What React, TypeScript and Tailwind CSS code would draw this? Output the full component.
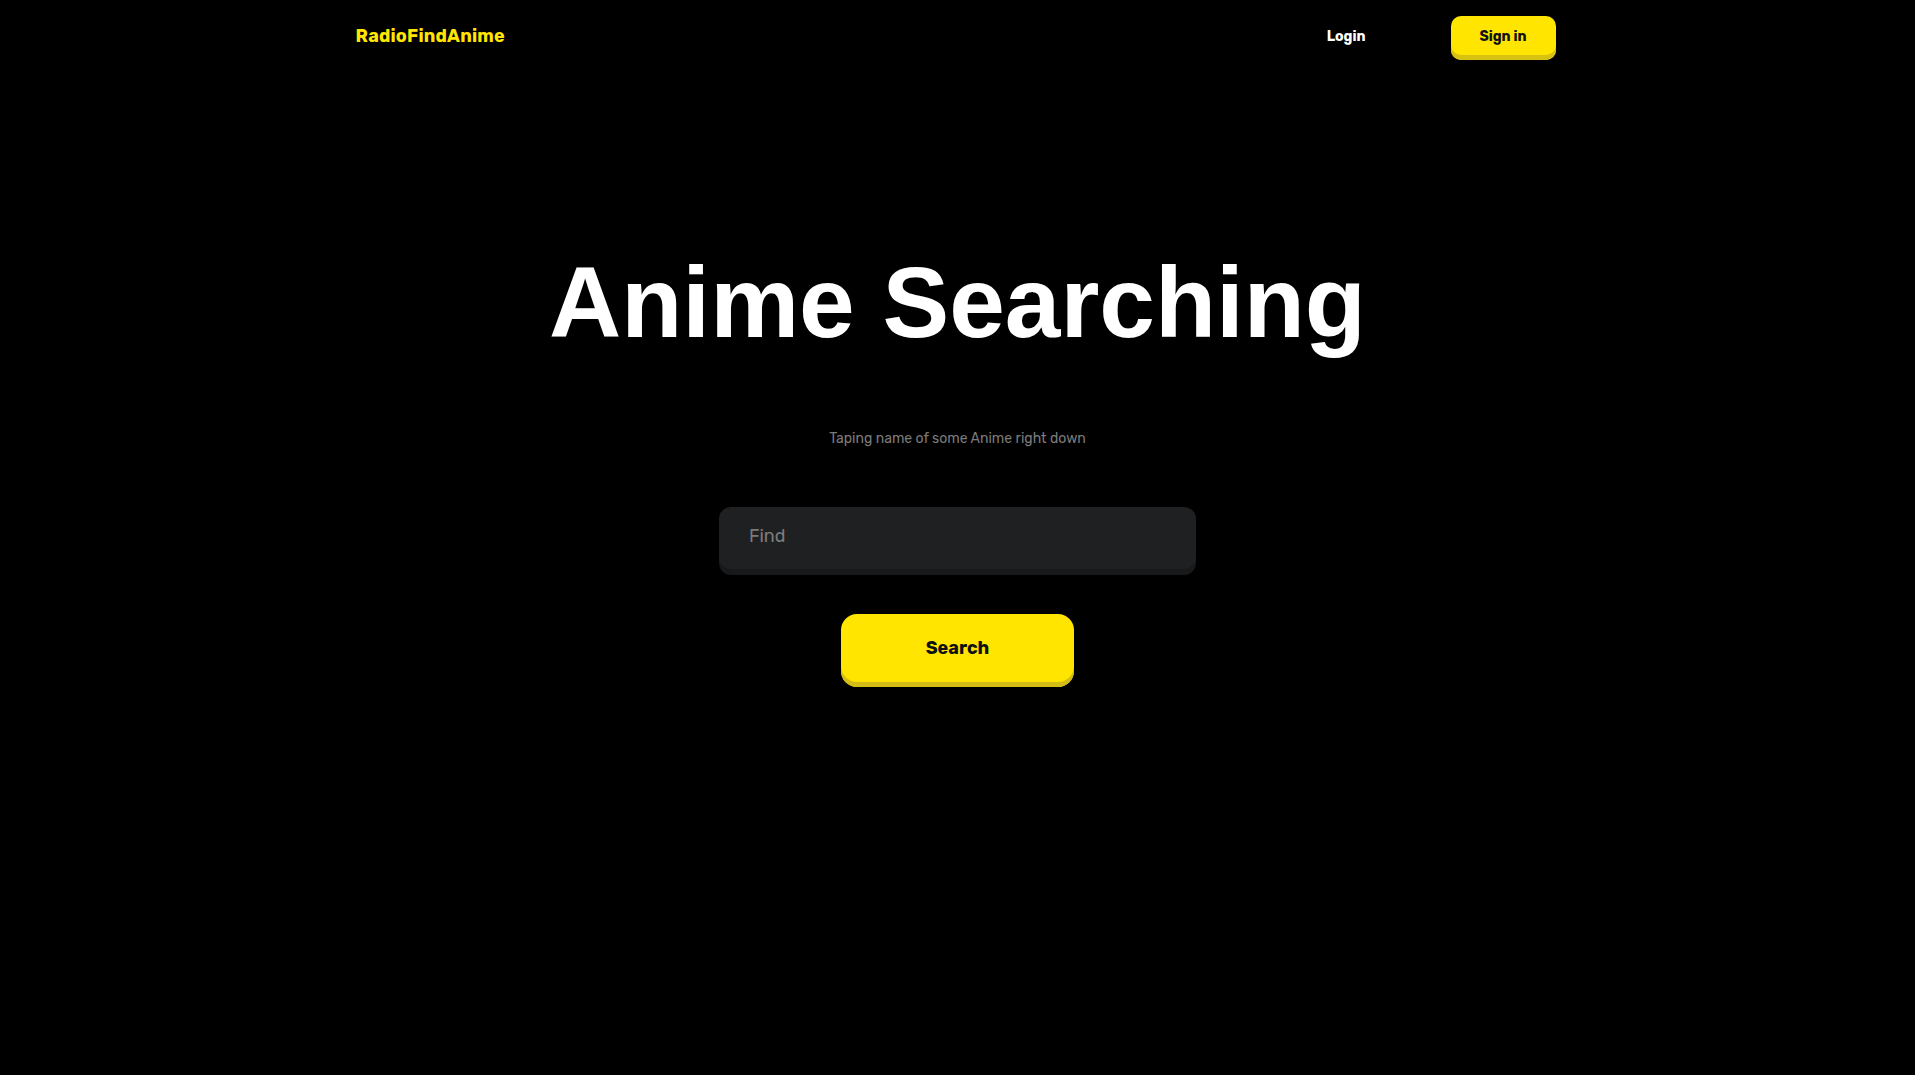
import { useState } from 'react';

const ui = { fontFamily: 'Rubik, Inter, "Noto Sans", sans-serif' };

export default function App() {
  const [query, setQuery] = useState('');

  return (
    <div className="min-h-[1075px] bg-black text-white" style={ui}>
      <nav className="mx-auto flex h-[76px] max-w-[1200px] items-start justify-between pt-4">
        <a href="#" className="mt-[7px] -ml-[2px] text-[18px] font-bold tracking-[0.2px] text-[#ffe500]">
          RadioFindAnime
        </a>
        <div className="mr-[2px] flex items-start">
          <button className="mr-[85px] mt-[10px] text-[14px] font-bold text-white">Login</button>
          <button className="h-[44px] w-[105px] rounded-[10px] bg-[#ffe500] pb-1 text-[14px] font-bold text-[#111] shadow-[inset_0_-5px_0_#d7c112]">
            Sign in
          </button>
        </div>
      </nav>

      <main className="flex flex-col items-center">
        <h1
          className="mt-[176px] text-[100px] leading-none font-bold text-white"
          style={{ fontFamily: '"Liberation Sans", Arial, sans-serif' }}
        >
          Anime Searching
        </h1>
        <p className="mt-[76px] text-[14px] text-[#7b7b7b]">Taping name of some Anime right down</p>

        <div className="mt-[58px] w-[477px] rounded-[12px] bg-[#1f2022] shadow-[0_6px_0_#18191b]">
          <input
            value={query}
            onChange={(e) => setQuery(e.target.value)}
            placeholder="Find"
            className="h-[62px] w-full bg-transparent px-[30px] pb-1 text-[18px] text-white outline-none placeholder:text-[#7c7c7c]"
          />
        </div>

        <button className="mt-[45px] h-[73px] w-[233px] rounded-[16px] bg-[#ffe500] pb-1 text-[18px] font-bold text-[#111] shadow-[inset_0_-5px_0_#d4bd14]">
          Search
        </button>
      </main>
    </div>
  );
}
